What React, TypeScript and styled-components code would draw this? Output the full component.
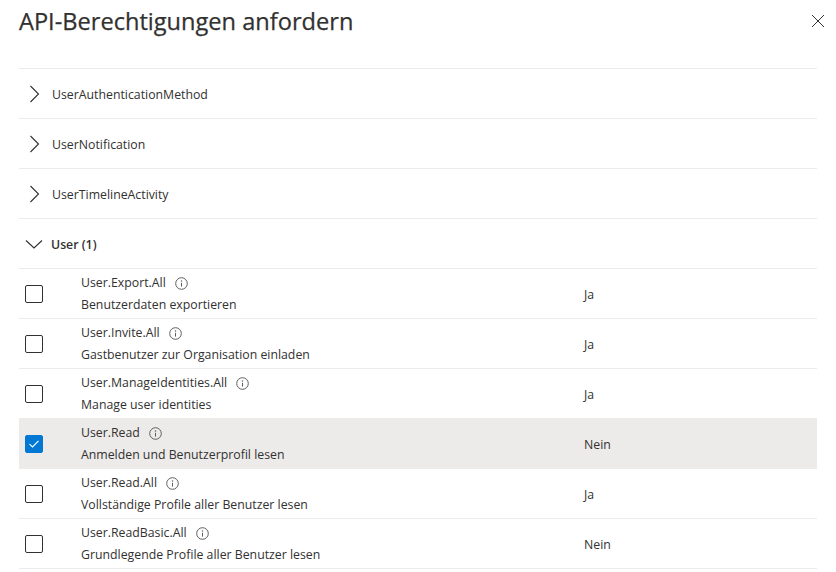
import React from 'react';
import styled, {createGlobalStyle} from 'styled-components';

const GlobalStyle = createGlobalStyle`
  html, body {
    margin: 0;
    padding: 0;
    background: #ffffff;
    font-family: "Open Sans", "Noto Sans", sans-serif;
    color: #323130;
  }
`;

const Panel = styled.div`
  width: 836px;
  height: 572px;
  overflow: hidden;
  box-sizing: border-box;
  padding: 0 19px;
`;

const Header = styled.div`
  display: flex;
  justify-content: space-between;
  align-items: flex-start;
  height: 68px;
`;

const Title = styled.h1`
  margin: 4px 0 0 0;
  font-size: 23.6px;
  font-weight: 400;
  line-height: 34px;
  color: #323130;
  -webkit-text-stroke: 0.25px #323130;
`;

const CloseButton = styled.button`
  border: none;
  background: transparent;
  padding: 0;
  margin: 14px -8px 0 0;
  width: 14px;
  height: 14px;
  display: flex;
  cursor: pointer;
`;

const List = styled.div`
  border-top: 1px solid #edebe9;
`;

const GroupRow = styled.div<{open?: boolean}>`
  display: flex;
  align-items: center;
  height: 50px;
  box-sizing: border-box;
  padding-top: 1px;
  border-bottom: 1px solid #edebe9;
  padding-left: ${({open}) => (open ? '6px' : '9px')};
  gap: ${({open}) => (open ? '8px' : '11px')};
  font-size: 12.3px;
`;

const GroupLabel = styled.span<{bold?: boolean}>`
  font-weight: ${({bold}) => (bold ? 600 : 400)};
`;

const PermissionRow = styled.div<{selected?: boolean}>`
  display: grid;
  grid-template-columns: 62px 503px 1fr;
  align-items: center;
  height: 50px;
  box-sizing: border-box;
  border-bottom: 1px solid #edebe9;
  background: ${({selected}) => (selected ? '#edebe9' : 'transparent')};
  font-size: 12.3px;
`;

const CheckCell = styled.div`
  padding-left: 6px;
  display: flex;
  align-items: center;
`;

const Box = styled.span<{checked?: boolean}>`
  width: 18px;
  height: 18px;
  box-sizing: border-box;
  border-radius: 2px;
  border: 1px solid ${({checked}) => (checked ? '#0078d4' : '#323130')};
  background: ${({checked}) => (checked ? '#0078d4' : '#ffffff')};
  display: flex;
  align-items: center;
  justify-content: center;
`;

const NameCell = styled.div`
  display: flex;
  flex-direction: column;
  gap: 4px;
  padding-top: 1px;
`;

const Name = styled.div`
  display: flex;
  align-items: center;
  gap: 9px;
  line-height: 18px;
`;

const Description = styled.div`
  line-height: 18px;
`;

const AdminCell = styled.div`
  padding-top: 1px;
`;

const Chevron = ({open}: {open?: boolean}) =>
  open ? (
    <svg width="18" height="12" viewBox="0 0 18 12">
      <path d="M1 2.5 L9 10 L17 2.5" fill="none" stroke="#323130" strokeWidth="1.1" />
    </svg>
  ) : (
    <svg width="13" height="18" viewBox="0 0 13 18">
      <path d="M2.5 1 L10.5 9 L2.5 17" fill="none" stroke="#323130" strokeWidth="1.1" />
    </svg>
  );

const InfoIcon = () => (
  <svg width="13" height="13" viewBox="0 0 13 13">
    <circle cx="6.5" cy="6.5" r="5.8" fill="none" stroke="#605e5c" strokeWidth="1" />
    <circle cx="6.5" cy="4" r="0.75" fill="#605e5c" />
    <path d="M6.5 5.8 V9.6" stroke="#605e5c" strokeWidth="1" />
  </svg>
);

const groups = ['UserAuthenticationMethod', 'UserNotification', 'UserTimelineActivity'];

const permissions = [
  {name: 'User.Export.All', desc: 'Benutzerdaten exportieren', admin: 'Ja'},
  {name: 'User.Invite.All', desc: 'Gastbenutzer zur Organisation einladen', admin: 'Ja'},
  {name: 'User.ManageIdentities.All', desc: 'Manage user identities', admin: 'Ja'},
  {name: 'User.Read', desc: 'Anmelden und Benutzerprofil lesen', admin: 'Nein', checked: true},
  {name: 'User.Read.All', desc: 'Vollständige Profile aller Benutzer lesen', admin: 'Ja'},
  {name: 'User.ReadBasic.All', desc: 'Grundlegende Profile aller Benutzer lesen', admin: 'Nein'},
];

export default function App() {
  return (
    <Panel>
      <GlobalStyle />
      <Header>
        <Title>API-Berechtigungen anfordern</Title>
        <CloseButton aria-label="Schließen">
          <svg width="14" height="14" viewBox="0 0 14 14">
            <path d="M1 1 L13 13 M13 1 L1 13" stroke="#323130" strokeWidth="1" />
          </svg>
        </CloseButton>
      </Header>
      <List>
        {groups.map((g) => (
          <GroupRow key={g}>
            <Chevron />
            <GroupLabel>{g}</GroupLabel>
          </GroupRow>
        ))}
        <GroupRow open>
          <Chevron open />
          <GroupLabel bold>User (1)</GroupLabel>
        </GroupRow>
        {permissions.map((p) => (
          <PermissionRow key={p.name} selected={p.checked}>
            <CheckCell>
              <Box checked={p.checked}>
                {p.checked && (
                  <svg width="12" height="10" viewBox="0 0 12 10">
                    <path d="M1.5 5.2 L4.5 8 L10.5 1.8" fill="none" stroke="#ffffff" strokeWidth="1.1" />
                  </svg>
                )}
              </Box>
            </CheckCell>
            <NameCell>
              <Name>
                {p.name}
                <InfoIcon />
              </Name>
              <Description>{p.desc}</Description>
            </NameCell>
            <AdminCell>{p.admin}</AdminCell>
          </PermissionRow>
        ))}
      </List>
    </Panel>
  );
}
